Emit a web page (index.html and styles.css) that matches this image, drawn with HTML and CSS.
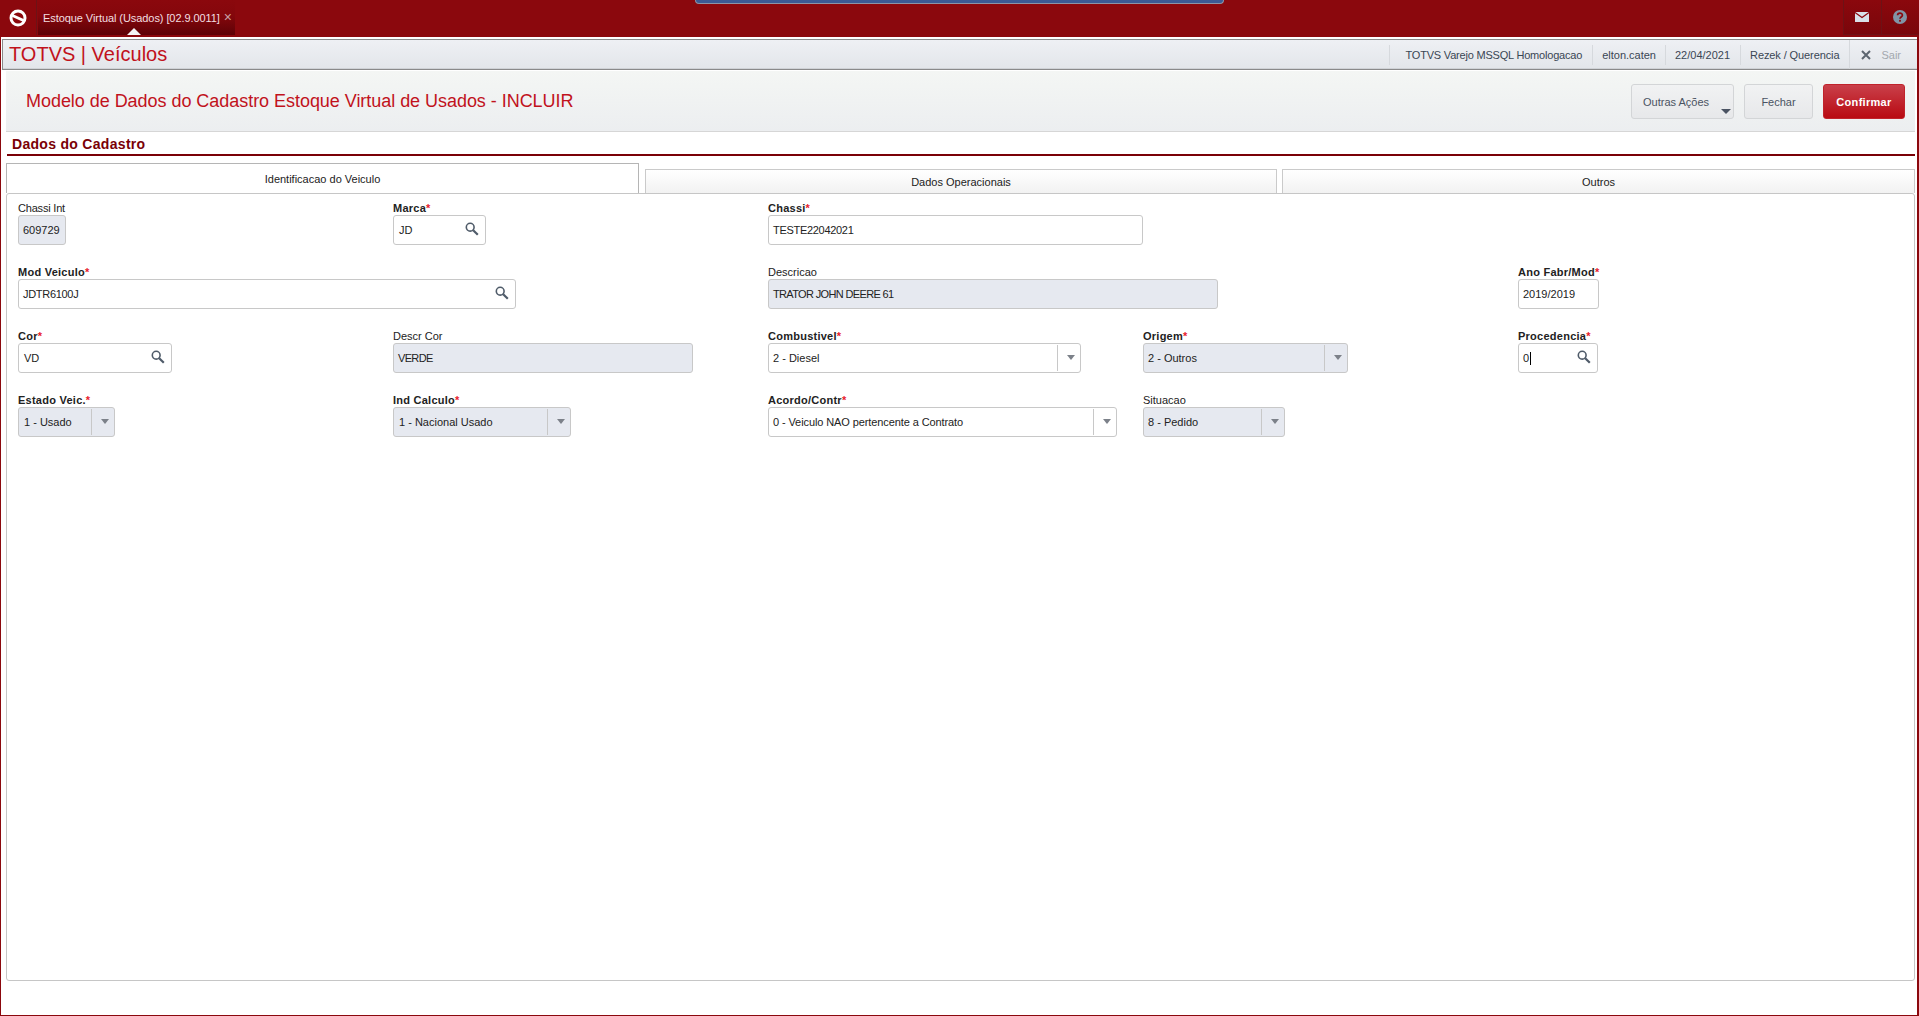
FILE: index.html
```html
<!DOCTYPE html>
<html lang="pt-BR">
<head>
<meta charset="utf-8">
<title>TOTVS | Veículos</title>
<link rel="stylesheet" href="styles.css">
</head>
<body>
<div class="frame">
  <div class="topbar">
    <div class="notch"></div>
    <div class="logo-cell">
      <svg class="logo" viewBox="0 0 18 18" width="18" height="18"><circle cx="9" cy="9" r="7" fill="none" stroke="#fff" stroke-width="3"/><path d="M3.5 6.5 L14.5 11.5" stroke="#fff" stroke-width="3" fill="none"/></svg>
    </div>
    <div class="app-tab">
      <span class="app-tab-text">Estoque Virtual (Usados) [02.9.0011]</span>
      <span class="app-tab-close">×</span>
      <span class="app-tab-arrow"></span>
    </div>
    <div class="top-actions">
      <div class="top-btn">
        <svg viewBox="0 0 14 10" width="14" height="10"><rect width="14" height="10" rx="0.5" fill="#d8e1e8"/><path d="M0 0.5 L7 5.5 L14 0.5" fill="none" stroke="#8b080d" stroke-width="1.2"/></svg>
      </div>
      <div class="top-btn">
        <svg viewBox="0 0 14 14" width="14" height="14"><circle cx="7" cy="7" r="7" fill="#8194a6"/><path d="M4.6 5.3 C4.6 2.4 9.4 2.4 9.4 5.2 C9.4 7 7 7 7 8.8" fill="none" stroke="#8b080d" stroke-width="1.7"/><rect x="6.1" y="9.9" width="1.8" height="1.8" fill="#8b080d"/></svg>
      </div>
    </div>
  </div>

  <header class="header">
    <div class="brand">TOTVS | Veículos</div>
    <div class="info">
      <span class="info-item info-env">TOTVS Varejo MSSQL Homologacao</span>
      <span class="info-item info-user">elton.caten</span>
      <span class="info-item info-date">22/04/2021</span>
      <span class="info-item info-org">Rezek / Querencia</span>
      <span class="info-item info-exit">
        <svg viewBox="0 0 10 10" width="10" height="10"><path d="M1 1 L9 9 M9 1 L1 9" stroke="#5d6670" stroke-width="2" fill="none"/></svg>
        <span class="exit-text">Sair</span>
      </span>
    </div>
  </header>

  <div class="toolbar">
    <h1 class="page-title">Modelo de Dados do Cadastro Estoque Virtual de Usados - INCLUIR</h1>
    <div class="actions">
      <button class="btn btn-more">Outras Ações<span class="btn-caret"></span></button>
      <button class="btn btn-close">Fechar</button>
      <button class="btn btn-primary">Confirmar</button>
    </div>
  </div>

  <h2 class="section">Dados do Cadastro</h2>

  <div class="tabs">
    <div class="tab tab-active">Identificacao do Veiculo</div>
    <div class="tab">Dados Operacionais</div>
    <div class="tab">Outros</div>
  </div>

  <div class="panel">
    <div class="form">
      <div class="field">
        <label class="lbl lbl-tight">Chassi Int</label>
        <div class="box ro w-chassi-int"><span class="val">609729</span></div>
      </div>
      <div class="field">
        <label class="lbl req">Marca<i>*</i></label>
        <div class="box w-marca"><span class="val">JD</span><svg class="mag" viewBox="0 0 14 14" width="14" height="14"><circle cx="5.2" cy="5.2" r="3.9" fill="none" stroke="#4f5b69" stroke-width="1.6"/><path d="M8.2 8.2 L12.8 12.8" stroke="#4f5b69" stroke-width="2.2"/></svg></div>
      </div>
      <div class="field span-3">
        <label class="lbl req">Chassi<i>*</i></label>
        <div class="box w-chassi"><span class="val upper-s">TESTE22042021</span></div>
      </div>

      <div class="field span-2">
        <label class="lbl req">Mod Veiculo<i>*</i></label>
        <div class="box w-mod"><span class="val upper-s">JDTR6100J</span><svg class="mag" viewBox="0 0 14 14" width="14" height="14"><circle cx="5.2" cy="5.2" r="3.9" fill="none" stroke="#4f5b69" stroke-width="1.6"/><path d="M8.2 8.2 L12.8 12.8" stroke="#4f5b69" stroke-width="2.2"/></svg></div>
      </div>
      <div class="field span-2">
        <label class="lbl">Descricao</label>
        <div class="box ro w-desc"><span class="val upper-l">TRATOR JOHN DEERE 61</span></div>
      </div>
      <div class="field">
        <label class="lbl req">Ano Fabr/Mod<i>*</i></label>
        <div class="box w-ano"><span class="val">2019/2019</span></div>
      </div>

      <div class="field">
        <label class="lbl req">Cor<i>*</i></label>
        <div class="box w-cor"><span class="val">VD</span><svg class="mag" viewBox="0 0 14 14" width="14" height="14"><circle cx="5.2" cy="5.2" r="3.9" fill="none" stroke="#4f5b69" stroke-width="1.6"/><path d="M8.2 8.2 L12.8 12.8" stroke="#4f5b69" stroke-width="2.2"/></svg></div>
      </div>
      <div class="field">
        <label class="lbl">Descr Cor</label>
        <div class="box ro w-descr-cor"><span class="val upper-l">VERDE</span></div>
      </div>
      <div class="field">
        <label class="lbl req">Combustivel<i>*</i></label>
        <div class="box sel w-comb"><span class="val">2 - Diesel</span><span class="drop"></span></div>
      </div>
      <div class="field">
        <label class="lbl req">Origem<i>*</i></label>
        <div class="box ro sel w-orig"><span class="val">2 - Outros</span><span class="drop"></span></div>
      </div>
      <div class="field">
        <label class="lbl req">Procedencia<i>*</i></label>
        <div class="box w-proc"><span class="val">0<span class="caret"></span></span><svg class="mag" viewBox="0 0 14 14" width="14" height="14"><circle cx="5.2" cy="5.2" r="3.9" fill="none" stroke="#4f5b69" stroke-width="1.6"/><path d="M8.2 8.2 L12.8 12.8" stroke="#4f5b69" stroke-width="2.2"/></svg></div>
      </div>

      <div class="field">
        <label class="lbl req">Estado Veic.<i>*</i></label>
        <div class="box ro sel w-estado"><span class="val">1 - Usado</span><span class="drop"></span></div>
      </div>
      <div class="field">
        <label class="lbl req">Ind Calculo<i>*</i></label>
        <div class="box ro sel w-ind"><span class="val">1 - Nacional Usado</span><span class="drop"></span></div>
      </div>
      <div class="field">
        <label class="lbl req">Acordo/Contr<i>*</i></label>
        <div class="box sel w-acordo"><span class="val val-long">0 - Veiculo NAO pertencente a Contrato</span><span class="drop"></span></div>
      </div>
      <div class="field">
        <label class="lbl">Situacao</label>
        <div class="box ro sel w-sit"><span class="val">8 - Pedido</span><span class="drop"></span></div>
      </div>
    </div>
  </div>
</div>
</body>
</html>
```

FILE: styles.css
```css
* { box-sizing: border-box; }
html, body { margin: 0; padding: 0; height: 100%; background: #fff; overflow: hidden; }
body { font-family: "Liberation Sans", Arial, sans-serif; font-size: 11px; color: #222; }

.frame {
  position: relative;
  height: 100vh;
  border-left: 1px solid #8b080d;
  border-right: 2px solid #8b080d;
  border-bottom: 1px solid #8b080d;
  display: flex;
  flex-direction: column;
}

/* top bar */
.topbar {
  position: relative;
  height: 37px;
  margin: 0 -2px 0 -1px;
  background: #8b080d;
  display: flex;
  flex: none;
}
.notch {
  position: absolute;
  left: 695px;
  top: 0;
  width: 529px;
  height: 4px;
  background: #3c5a94;
  border: 1px solid #8c94a6;
  border-top: 0;
  border-radius: 0 0 4px 4px;
}
.logo-cell {
  width: 37px;
  height: 35px;
  border-right: 1px solid #6d1216;
  display: flex;
  align-items: center;
  justify-content: center;
}
.app-tab {
  position: relative;
  margin-left: 1px;
  width: 197px;
  height: 35px;
  background: linear-gradient(#8b080d 0%, #84070c 45%, #5e0207 100%);
  padding-left: 5px;
  display: flex;
  align-items: center;
  color: #f3dfe0;
  font-size: 11px;
}
.app-tab-text { white-space: nowrap; letter-spacing: -0.07px; }
.app-tab-close { margin-left: 4px; color: #c9a0a2; font-size: 14px; line-height: 14px; position: relative; top: -1px; }
.app-tab-arrow {
  position: absolute;
  left: 89px;
  bottom: 0;
  width: 0;
  height: 0;
  border-left: 7px solid transparent;
  border-right: 7px solid transparent;
  border-bottom: 7px solid #f4f4f4;
}
.top-actions { margin-left: auto; display: flex; }
.top-btn {
  width: 38px;
  height: 35px;
  padding-right: 1px;
  background: linear-gradient(#8b080d, #7a060b);
  border-left: 1px solid #6d1216;
  border-bottom: 1px solid #6d1216;
  display: flex;
  align-items: center;
  justify-content: center;
}

/* header */
.header {
  flex: none;
  height: 31px;
  margin: 2px 0 0 1px;
  border-top: 1px solid #8a8a8a;
  border-bottom: 1px solid #8a8a8a;
  border-left: 1px solid #8a8a8a;
  background: linear-gradient(#eef0f4, #e3e6ea);
  box-shadow: inset 0 -1px 0 #cfd2d6;
  display: flex;
  align-items: center;
  justify-content: space-between;
}
.brand { color: #c1121c; font-size: 20px; margin-left: 6px; white-space: nowrap; }
.info { display: flex; height: 100%; align-items: center; }
.info-item {
  display: flex;
  align-items: center;
  height: 20px;
  color: #3a4654;
  font-size: 11px;
  border-left: 1px solid #d6d9dd;
  white-space: nowrap;
}
.info-env { padding: 0 10px 0 16px; letter-spacing: -0.2px; }
.info-user { padding: 0 9px; }
.info-date { padding: 0 10px 0 9px; }
.info-org { padding: 0 10px 0 9px; letter-spacing: -0.1px; }
.info-exit { padding: 0 16px 0 11px; height: 29px; }
.exit-text { margin-left: 10px; color: #a3a8ae; }

/* toolbar */
.toolbar {
  flex: none;
  height: 61px;
  margin: 1px 2px 0 5px;
  background: linear-gradient(#f4f6f4, #eceef0);
  border-bottom: 1px solid #d6d6d6;
  display: flex;
  align-items: center;
  justify-content: space-between;
  padding: 0 10px 0 20px;
}
.page-title { margin: 0; font-size: 18px; font-weight: normal; color: #c1121c; white-space: nowrap; letter-spacing: -0.04px; }
.actions { display: flex; gap: 10px; }
.btn {
  position: relative;
  height: 35px;
  font-family: inherit;
  font-size: 11px;
  border-radius: 3px;
  border: 1px solid #d3d5d7;
  background: linear-gradient(#f1f2f3, #e7e8ea);
  color: #4a5362;
  padding: 1px 0 0;
}
.btn-more { width: 103px; text-align: left; padding-left: 11px; }
.btn-close { width: 69px; }
.btn-primary {
  width: 82px;
  border-color: #c0232b;
  background: linear-gradient(#c9404a, #b90a12);
  color: #fff;
  font-weight: bold;
  letter-spacing: 0.3px;
}
.btn-caret {
  position: absolute;
  right: 2px;
  bottom: 4px;
  width: 0;
  height: 0;
  border-left: 5px solid transparent;
  border-right: 5px solid transparent;
  border-top: 5px solid #4a5362;
}

/* section */
.section {
  flex: none;
  margin: 0 2px 0 6px;
  height: 24px;
  border-bottom: 2px solid #7a0006;
  padding: 1px 0 0 5px;
  font-size: 14px;
  line-height: 23px;
  font-weight: bold;
  color: #7a0006;
  letter-spacing: 0.3px;
}

/* tabs */
.tabs {
  flex: none;
  display: grid;
  grid-template-columns: 634px 632px 633px;
  column-gap: 5px;
  margin: 7px 2px 0 5px;
  height: 30px;
  align-items: end;
}
.tab {
  height: 24px;
  border: 1px solid #cacaca;
  border-bottom: 0;
  background: linear-gradient(#fff, #f2f2f2);
  display: flex;
  align-items: center;
  justify-content: center;
  color: #222;
}
.tab-active { width: 633px; height: 30px; background: #fff; border-color: #b5b5b5; }

/* panel */
.panel {
  flex: none;
  height: 788px;
  margin: 0 2px 0 5px;
  border: 1px solid #c6c6c6;
  border-radius: 3px;
  padding: 7px 0 0 11px;
}
.form {
  display: grid;
  grid-template-columns: repeat(5, 375px);
  grid-auto-rows: 44px;
  row-gap: 20px;
}
.span-2 { grid-column: span 2; }
.span-3 { grid-column: span 3; }
.lbl { display: block; height: 14px; line-height: 14px; font-size: 11px; color: #222; white-space: nowrap; }
.lbl-tight { letter-spacing: -0.2px; }
.req { font-weight: bold; letter-spacing: 0.25px; }
.req i { color: #e8212b; font-style: normal; font-weight: bold; }
.box {
  position: relative;
  height: 30px;
  border: 1px solid #c8c8c8;
  border-radius: 3px;
  background: #fff;
  display: flex;
  align-items: center;
  padding-left: 4px;
}
.ro { background: #e6e9f0; }
.val { color: #222; font-size: 11px; white-space: nowrap; }
.upper-s { letter-spacing: -0.3px; }
.upper-l { letter-spacing: -0.65px; }
.val-long { letter-spacing: -0.1px; }
.caret { display: inline-block; width: 1px; height: 13px; background: #000; vertical-align: -3px; margin-left: 1px; }
.mag { position: absolute; right: 6px; top: 6px; }
.drop {
  position: absolute;
  right: 0;
  top: 1px;
  bottom: 1px;
  width: 23px;
  border-left: 1px solid #c8c8c8;
}
.drop::after {
  content: "";
  position: absolute;
  left: 9px;
  top: 10px;
  border-left: 4px solid transparent;
  border-right: 4px solid transparent;
  border-top: 5px solid #7c8189;
}

.w-chassi-int { width: 48px; }
.w-marca { width: 93px; padding-left: 5px; }
.w-chassi { width: 375px; }
.w-mod { width: 498px; }
.w-desc { width: 450px; }
.w-ano { width: 81px; }
.w-cor { width: 154px; padding-left: 5px; }
.w-descr-cor { width: 300px; }
.w-comb { width: 313px; }
.w-orig { width: 205px; }
.w-proc { width: 80px; }
.w-estado { width: 97px; padding-left: 5px; }
.w-ind { width: 178px; padding-left: 5px; }
.w-acordo { width: 349px; }
.w-sit { width: 142px; }
```
